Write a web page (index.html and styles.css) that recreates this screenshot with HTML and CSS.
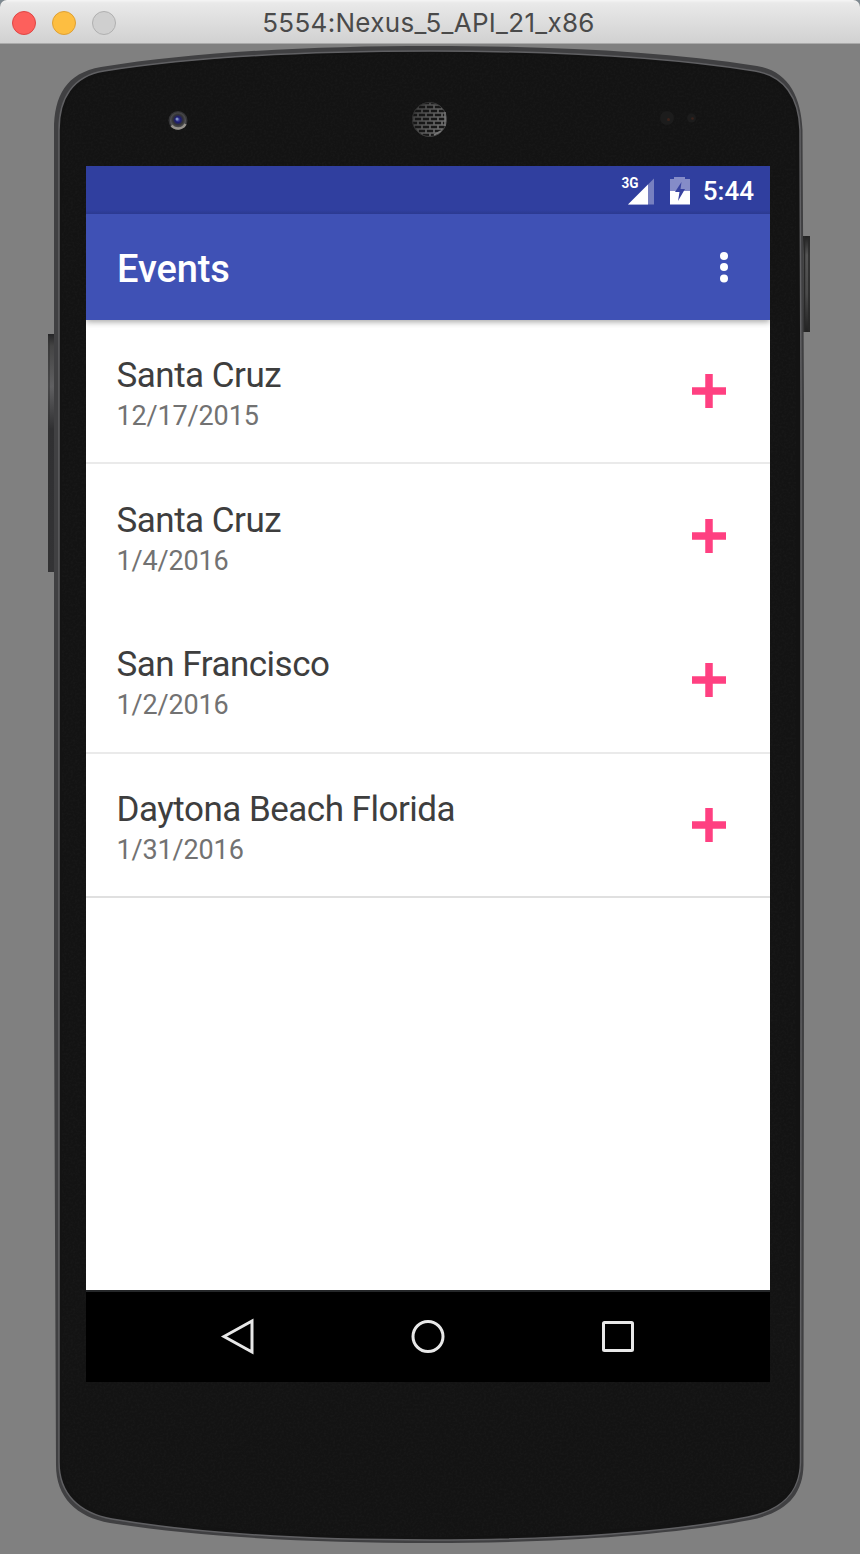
FILE: index.html
```html
<!DOCTYPE html>
<html lang="en">
<head>
<meta charset="utf-8">
<title>5554:Nexus_5_API_21_x86</title>
<link rel="stylesheet" href="styles.css">
</head>
<body>
<div class="window">
  <header class="titlebar">
    <div class="lights"><i class="light red"></i><i class="light yellow"></i><i class="light off"></i></div>
    <h1 class="window-title"><span>5554:Nexus_5_API_21_x86</span></h1>
  </header>
  <main class="desk">
    <svg class="shell" viewBox="0 44 860 1510" width="860" height="1510" aria-hidden="true">
      <defs>
        <linearGradient id="left" x1="0" x2="0" y1="0" y2="1"><stop offset="0" stop-color="#252527"/><stop offset=".05" stop-color="#444"/><stop offset=".22" stop-color="#606062"/><stop offset=".4" stop-color="#303032"/><stop offset="1" stop-color="#333335"/></linearGradient>
        <linearGradient id="right" x1="0" x2="0" y1="0" y2="1"><stop offset="0" stop-color="#222"/><stop offset=".2" stop-color="#555"/><stop offset=".6" stop-color="#4b4b4b"/><stop offset="1" stop-color="#222"/></linearGradient>
        <radialGradient id="lens" cx=".5" cy=".45"><stop offset="0" stop-color="#4d55b0"/><stop offset=".35" stop-color="#1c1c70"/><stop offset=".65" stop-color="#333"/><stop offset="1" stop-color="#55555a"/></radialGradient>
        <linearGradient id="shade" x1="0" x2="1" y1="0" y2=".5"><stop offset="0" stop-color="#131313" stop-opacity=".6"/><stop offset="1" stop-color="#131313" stop-opacity="0"/></linearGradient>
        <pattern id="mesh" width="8" height="8" patternUnits="userSpaceOnUse"><path d="M0 1H8M0 5H8M2 1V5M6 5V8M6 0V1" fill="none" stroke="#707070" stroke-width="1.700"/></pattern>
        <filter id="grain" x="0" y="0" width="1" height="1"><feTurbulence type="fractalNoise" baseFrequency=".45" numOctaves="2"/><feColorMatrix values="0 0 0 0 .5  0 0 0 0 .5  0 0 0 0 .5  .25 0 0 0 -.09"/><feComposite in2="SourceGraphic" operator="in"/></filter>
      </defs>
      <path d="M48 334h8v238h-8z" fill="url(#left)"/><path d="M49 336v234" stroke="#333" stroke-width="1"/>
      <path d="M802 236h8v96h-8z" fill="url(#right)"/><path d="M804.500 236v96M809 236v96" stroke="#292929" stroke-width="1.500"/>
      <path d="M54 130C54 96 66 73 101 67C200 51 320 46 430 46C550 46 660 51 757 66C788 71 801 96 802.500 130L804 400V1000L803.500 1465C803 1495 786 1513 750 1520C660 1537 540 1543 430 1543C310 1543 200 1537 110 1523C76 1517 56 1497 56 1465L54 1000Z" fill="#404042"/>
      <path d="M59 130C59 98 73 76 104 71C200 56 320 51 430 51C550 51 660 56 755 71C784 76 799 97 800 130L801 400V1000L800.500 1462C800 1493 782 1510 748 1517C660 1534 540 1540 430 1540C310 1540 200 1534 112 1519C79 1513 59 1494 59 1462Z" fill="#131313" stroke="#606063" stroke-width="1.500"/>
      <path d="M62 130C62 98 76 79 106 74C200 59 320 53 430 53C550 53 660 59 753 74C781 79 796 97 796 130V1460C796 1490 781 1507 748 1513C660 1529 540 1537 430 1537C310 1537 200 1530 113 1515C81 1509 62 1491 62 1460Z" fill="#131313"/>
      <path d="M62 130C62 98 76 79 106 74C200 59 320 53 430 53C550 53 660 59 753 74C781 79 796 97 796 130V1460C796 1490 781 1507 748 1513C660 1529 540 1537 430 1537C310 1537 200 1530 113 1515C81 1509 62 1491 62 1460Z" filter="url(#grain)" opacity=".25"/>
      <circle cx="178" cy="120.500" r="9.500" fill="#343436"/><circle cx="178" cy="120.500" r="8" fill="url(#lens)"/><path d="M171.500 125.500A8.500 8.500 0 0 0 185.500 124" fill="none" stroke="#96928c" stroke-width="2.500"/><circle cx="177" cy="119" r="1.500" fill="#7f92c0"/>
      <circle cx="429.500" cy="119.500" r="17.500" fill="#191919"/><circle cx="429.500" cy="119.500" r="17" fill="url(#mesh)" stroke="#444" stroke-width="1"/><circle cx="429.500" cy="119.500" r="17.500" fill="url(#shade)"/><path d="M445 112v14M441 131l-7 4" stroke="#777" stroke-width="1.500"/>
      <circle cx="667" cy="118" r="7" fill="#1c1c1c"/><circle cx="668.500" cy="119.500" r="1.500" fill="#3a221b"/><circle cx="691.500" cy="118" r="4.500" fill="#1c1c1c"/><circle cx="692.500" cy="118.500" r="1.300" fill="#3a221b"/>
    </svg>
    <section class="screen">
      <div class="status">
        <svg width="70" height="30" viewBox="0 0 70 30" aria-hidden="true">
          <path d="M7 28.500L33 2.500V28.500Z" fill="#7780c0"/><path d="M7 28.500L27 8.500V28.500Z" fill="#fff"/>
          <text class="network" x="0.500" y="12" textLength="17" lengthAdjust="spacingAndGlyphs">3G</text>
          <path d="M49 3H53V1H64V3H69V15H49Z" fill="#858cc8"/><path d="M49 15H69V28.500H49Z" fill="#fff"/>
          <path d="M60.500 6L54 16H58.500L57 25L64 13H59.500Z" fill="#3742a0"/>
        </svg>
        <span class="clock">5:44</span>
      </div>
      <div class="appbar"><h2 class="app-title"><span>Events</span></h2>
        <svg class="more" width="10" height="32" viewBox="0 0 10 32" aria-hidden="true"><circle cx="5" cy="4" r="4"/><circle cx="5" cy="15" r="4"/><circle cx="5" cy="26.500" r="4"/></svg>
      </div>
      <ul class="events">
        <li class="event short"><div class="info"><p class="place">Santa Cruz</p><p class="date">12/17/2015</p></div><svg class="add" viewBox="0 0 34 34"><path d="M0 17H34M17 0V34"/></svg></li>
        <li class="event plain"><div class="info"><p class="place">Santa Cruz</p><p class="date">1/4/2016</p></div><svg class="add" viewBox="0 0 34 34"><path d="M0 17H34M17 0V34"/></svg></li>
        <li class="event"><div class="info"><p class="place">San Francisco</p><p class="date">1/2/2016</p></div><svg class="add" viewBox="0 0 34 34"><path d="M0 17H34M17 0V34"/></svg></li>
        <li class="event short last"><div class="info"><p class="place">Daytona Beach Florida</p><p class="date">1/31/2016</p></div><svg class="add" viewBox="0 0 34 34"><path d="M0 17H34M17 0V34"/></svg></li>
      </ul>
      <nav class="nav">
        <svg width="36" height="38" viewBox="0 0 36 38"><path d="M4 18.500L32 3V34Z"/></svg>
        <svg width="36" height="38" viewBox="0 0 36 38"><circle cx="18" cy="18.500" r="15"/></svg>
        <svg width="36" height="38" viewBox="0 0 36 38"><rect x="3.500" y="4.500" width="29" height="28" rx="1"/></svg>
      </nav>
    </section>
  </main>
</div>
</body>
</html>
```
FILE: styles.css
```css
* { box-sizing: border-box; }
body { margin: 0; background: #808080; font-family: Roboto, "Liberation Sans", sans-serif; }
h1, h2, p, ul { margin: 0; padding: 0; }
.window { width: 860px; height: 1554px; display: flex; flex-direction: column; overflow: hidden; background: #808080; }
.titlebar { height: 44px; display: grid; grid-template-columns: 128px 1fr 128px; align-items: center; background: linear-gradient(#f5f5f5, #e9e9e9 3px, #d1d1d1); border-bottom: 1px solid #aaa; box-shadow: 0 0 0 8px #7e8991; border-radius: 7px 7px 0 0; position: relative; }
.lights { display: flex; gap: 16px; padding-left: 12px; }
.light { width: 24px; height: 24px; border-radius: 50%; border: 1px solid; }
.red { background: #fd605c; border-color: #df4644; }
.yellow { background: #fdbe41; border-color: #dea034; }
.off { background: #cfcfcf; border-color: #b0b0b0; }
.window-title { font: 400 26px/44px Inter, sans-serif; font-feature-settings: "calt" 0; letter-spacing: .3px; color: #4a4a4a; text-align: center; white-space: nowrap; padding: 1px 3px 0 0; }
.desk { flex: 1; position: relative; background: #808080; padding: 122px 90px 0 86px; }
.shell { position: absolute; left: 0; top: 0; }
.screen { position: relative; width: 684px; height: 1216px; display: flex; flex-direction: column; background: #fff; }
.status { height: 48px; display: flex; align-items: center; justify-content: flex-end; gap: 12px; padding: 2px 16px 0 0; background: linear-gradient(#303f9f 44px, #2b3990); color: #fff; }
.network { font: 700 14px Roboto, sans-serif; fill: #fff; }
.clock { font-size: 26px; font-weight: 500; line-height: 30px; }
.appbar { height: 106px; display: flex; align-items: center; justify-content: space-between; padding: 2px 41px 0 31px; background: #3f51b5; color: #fff; box-shadow: 0 2px 6px rgba(0,0,0,.35); clip-path: inset(0 0 -8px 0); z-index: 1; }
.app-title { font-size: 38px; font-weight: 500; line-height: 44px; letter-spacing: -.1px; padding-top: 2px; }
.more { fill: #fff; }
.events { flex: 1; list-style: none; }
.event { height: 145px; display: flex; align-items: flex-start; justify-content: space-between; padding: 35px 44px 0 30.5px; border-bottom: 2px solid #eaeaea; }
.short { height: 144px; }
.plain { border-bottom-color: transparent; }
.plain .info { padding-top: 1px; }
.last { border-bottom-color: #e0e0e0; }
.place { font-size: 35px; line-height: 42px; letter-spacing: -.5px; color: #3e3e3e; white-space: nowrap; }
.date { font-size: 27px; line-height: 32px; letter-spacing: -.15px; margin-top: 3px; color: #727272; white-space: nowrap; }
.add { width: 34px; height: 34px; margin-top: 19px; fill: none; stroke: #ff4081; stroke-width: 7.500px; }
.plain .add { margin-top: 20px; }
.last .add { margin-top: 19px; }
.nav { height: 92px; display: flex; justify-content: center; align-items: center; gap: 154px; background: #000; border-top: 2px solid #252729; }
.nav svg { fill: none; stroke: #e8e8e8; stroke-width: 3; }
```
